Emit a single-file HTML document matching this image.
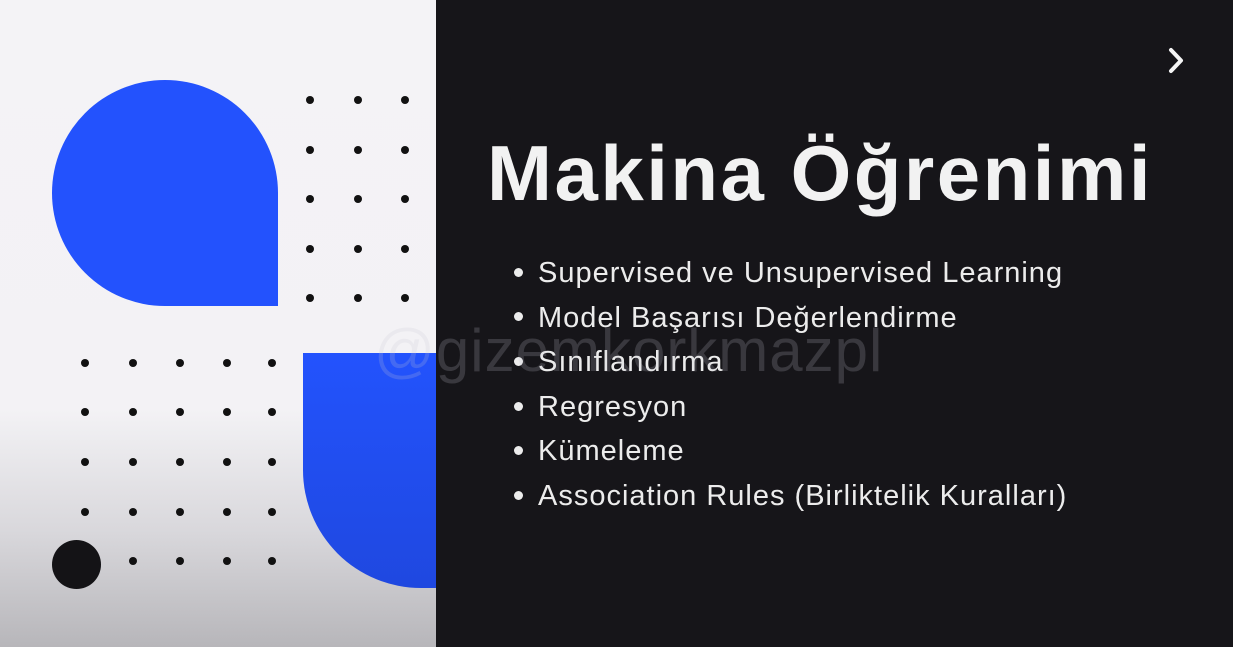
<!DOCTYPE html>
<html><head><meta charset="utf-8"><style>
*{margin:0;padding:0;box-sizing:border-box}
body{width:1233px;height:647px;overflow:hidden;background:#161519;position:relative;font-family:"Liberation Sans",sans-serif}
#left{position:absolute;left:0;top:0;width:436px;height:647px;background:linear-gradient(#f4f3f6 0,#f3f2f5 410px,#d9d8dc 530px,#b7b6ba 647px);overflow:hidden}
.b1{position:absolute;left:52px;top:80px;width:226px;height:226px;background:#2352fd;border-radius:113px 113px 0 113px}
.b2{position:absolute;left:303px;top:353px;width:250px;height:235px;background:linear-gradient(#2353fd,#1f48e0);border-radius:0 0 0 118px}
.d{position:absolute;width:8px;height:8px;border-radius:50%;background:#111}
.big{position:absolute;left:52px;top:540px;width:49px;height:49px;border-radius:50%;background:#141316}
h1{position:absolute;left:487px;top:128px;color:#f2f2f2;font-size:78px;font-weight:bold;letter-spacing:2.5px;white-space:nowrap}
ul{position:absolute;left:512px;top:256px;list-style:none;color:#ececec;font-size:29px;letter-spacing:1px}
li{height:44.6px;line-height:34px;white-space:nowrap}
li:before{content:"";display:inline-block;width:9px;height:9px;border-radius:50%;background:#ececec;margin:0 15px 4px 2px;vertical-align:middle}
.wm{position:absolute;left:374px;top:316px;font-size:60px;color:rgba(200,200,210,.2);white-space:nowrap;letter-spacing:1px}
</style></head><body>
<div id="left">
<div class="b1"></div><div class="b2"></div>
<div id="dots"></div>
<div class="big"></div>
</div>
<h1>Makina Öğrenimi</h1>
<ul>
<li>Supervised ve Unsupervised Learning</li>
<li>Model Başarısı Değerlendirme</li>
<li>Sınıflandırma</li>
<li>Regresyon</li>
<li>Kümeleme</li>
<li>Association Rules (Birliktelik Kuralları)</li>
</ul>
<div class="wm">@gizemkorkmazpl</div>
<svg style="position:absolute;left:1166px;top:47px" width="22" height="28" viewBox="0 0 22 28"><path d="M5 3 L15 13.5 L5 24" fill="none" stroke="#f5f5f5" stroke-width="4" stroke-linecap="round" stroke-linejoin="round"/></svg>
<script>
var L=document.getElementById('dots'),h='';
[310,358,405].forEach(function(x){[100,150,199,249,298].forEach(function(y){h+='<div class="d" style="left:'+(x-4)+'px;top:'+(y-4)+'px"></div>'})});
[85,133,180,227,272].forEach(function(x){[363,412,462,512,561].forEach(function(y){if(x==85&&y==561)return;h+='<div class="d" style="left:'+(x-4)+'px;top:'+(y-4)+'px"></div>'})});
L.innerHTML=h;
</script>
</body></html>
